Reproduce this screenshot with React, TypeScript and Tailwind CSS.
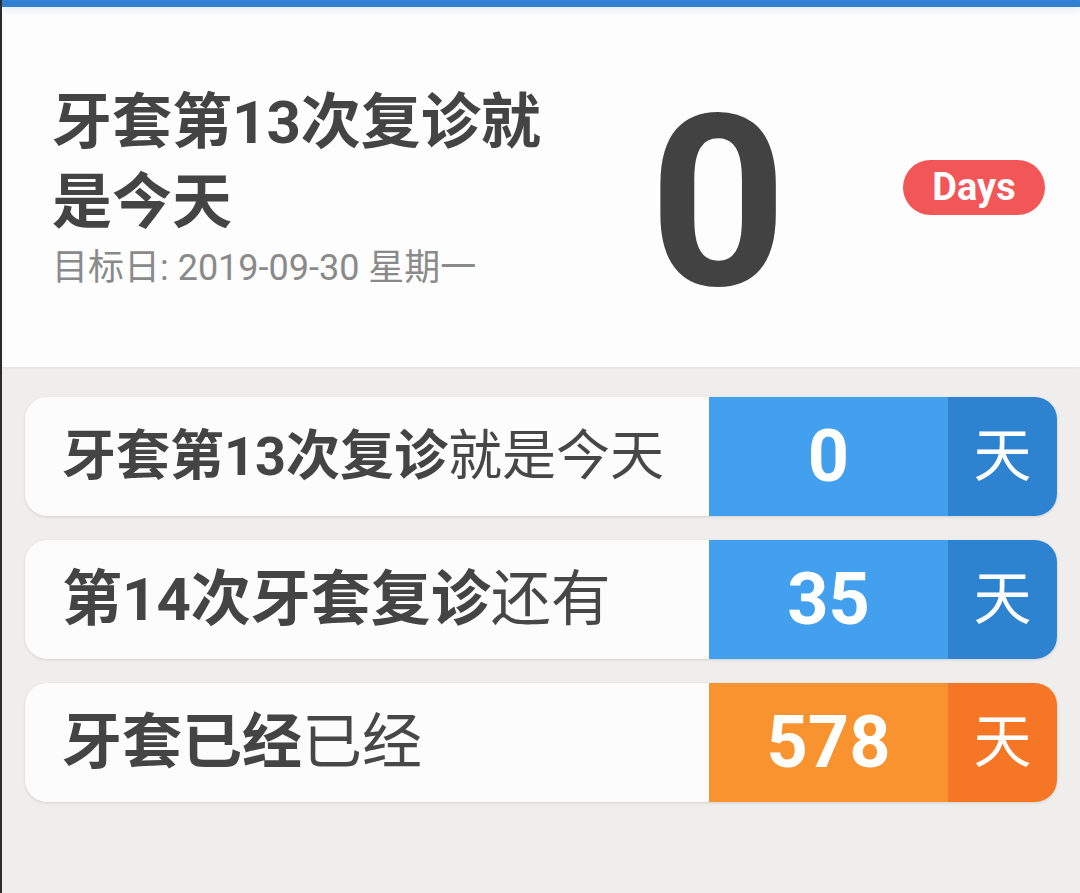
const font = { fontFamily: 'Roboto, "Noto Sans CJK SC", sans-serif' };

const rows = [
  { bold: "牙套第13次复诊", rest: "就是今天", value: "0", size: "text-[54px]", tone: "blue" },
  { bold: "第14次牙套复诊", rest: "还有", value: "35", size: "text-[60px]", tone: "blue" },
  { bold: "牙套已经", rest: "已经", value: "578", size: "text-[60px]", tone: "orange" },
];

const App = () => {
  return (
    <div style={font} className="min-h-[893px] bg-[#efeeec] border-l-2 border-[#2b2b2b] text-[#444444]">
      {/* status strip */}
      <div className="relative z-10 h-[7px] bg-[#2f80d1] shadow-[0_2px_8px_rgba(20,60,110,0.14)]" />

      {/* top event */}
      <div className="h-[360px] bg-[#fdfdfd] flex items-center pl-[50px] shadow-[0_1px_3px_rgba(0,0,0,0.06)]">
        <div className="w-[560px]">
          <div className="text-[60px] leading-[80px] font-bold w-[540px]">牙套第13次复诊就是今天</div>
          <div className="text-[36px] leading-[46px] pt-[2px] text-[#8a8a8a]">目标日: 2019-09-30 星期一</div>
        </div>
        <div className="self-start mt-[76px] w-[212px] text-center text-[240px] leading-none font-bold text-[#424242]">0</div>
        <div className="ml-[79px] h-[55px] w-[142px] rounded-full bg-[#f25656] flex items-center justify-center text-white font-bold text-[38px]">
          Days
        </div>
      </div>

      {/* list */}
      <div className="flex flex-col gap-[24px] pt-[30px] pl-[23px] pr-[23px]">
        {rows.map((r) => (
          <div key={r.bold} className="flex h-[119px] rounded-[22px] overflow-hidden bg-[#fcfcfc] shadow-[0_1px_3px_rgba(0,0,0,0.12)]">
            <div className={`flex-1 flex items-center pl-[37px] whitespace-nowrap ${r.size}`}>
              <span className="font-bold">{r.bold}</span>
              <span className="text-[#474747]">{r.rest}</span>
            </div>
            <div
              className={`w-[239px] flex items-center justify-center text-white font-bold text-[72px] ${
                r.tone === "blue" ? "bg-[#43a0ee]" : "bg-[#f9932f]"
              }`}
            >
              {r.value}
            </div>
            <div
              className={`w-[109px] flex items-center justify-center text-white text-[58px] ${
                r.tone === "blue" ? "bg-[#2e83d1]" : "bg-[#f57624]"
              }`}
            >
              天
            </div>
          </div>
        ))}
      </div>
    </div>
  );
};

export default App;
